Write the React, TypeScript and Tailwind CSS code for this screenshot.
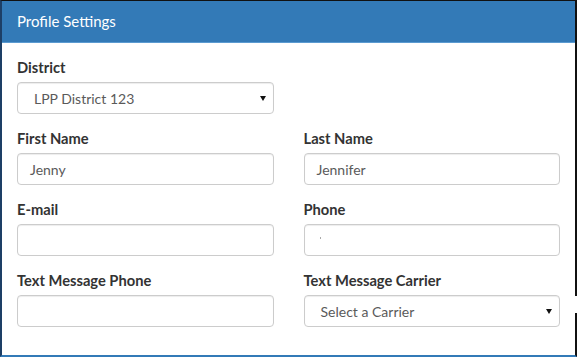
import React from "react";

function Field({ label, children }: { label: string; children: React.ReactNode }) {
  return (
    <div className="flex flex-col">
      <label className="text-[14.7px] leading-[20px] font-bold text-[#333333] mb-[5px]">{label}</label>
      {children}
    </div>
  );
}

function TextInput({ value, dot }: { value?: string; dot?: boolean }) {
  return (
    <div className="h-[32px] border border-[#cccccc] rounded-[4px] bg-white shadow-[inset_0_1px_1px_rgba(0,0,0,0.075)] flex items-center pl-[12px] text-[14px] text-[#5a5a5a]">
      {value}
      {dot && <span className="block w-[1px] h-[2px] bg-[#aaaaaa] ml-[3px] mt-[-4px]" />}
    </div>
  );
}

function SelectBox({ value }: { value: string }) {
  return (
    <div className="h-[32px] border border-[#cccccc] rounded-[4px] bg-white shadow-[inset_0_1px_1px_rgba(0,0,0,0.075)] flex items-center justify-between pl-[16px] pr-[7px] text-[14px] text-[#5a5a5a]">
      <span>{value}</span>
      <svg width="6" height="5" viewBox="0 0 6 5">
        <polygon points="0,0 6,0 3,5" fill="#111111" />
      </svg>
    </div>
  );
}

export default function App() {
  return (
    <div className="w-[578px] h-[359px] bg-white" style={{ fontFamily: "Lato, 'Open Sans', sans-serif" }}>
      <div className="relative w-[577px] h-[357px] border-t border-t-[#111111] border-l-2 border-l-[#1d3f66] border-r-2 border-r-[#111111] border-b-2 border-b-[#337ab7] flex flex-col">
        <div className="h-[42px] bg-[#337ab7] border-b border-b-[#5b9bd1] flex items-center pl-[15px] text-white text-[15px]">
          Profile Settings
        </div>
        <div className="px-[15px] pt-[14px] flex flex-col gap-[14px]">
          <div className="grid grid-cols-2 gap-x-[30px]">
            <Field label="District">
              <SelectBox value="LPP District 123" />
            </Field>
          </div>
          <div className="grid grid-cols-2 gap-x-[30px]">
            <Field label="First Name">
              <TextInput value="Jenny" />
            </Field>
            <Field label="Last Name">
              <TextInput value="Jennifer" />
            </Field>
          </div>
          <div className="grid grid-cols-2 gap-x-[30px]">
            <Field label="E-mail">
              <TextInput />
            </Field>
            <Field label="Phone">
              <TextInput dot />
            </Field>
          </div>
          <div className="grid grid-cols-2 gap-x-[30px]">
            <Field label="Text Message Phone">
              <TextInput />
            </Field>
            <Field label="Text Message Carrier">
              <SelectBox value="Select a Carrier" />
            </Field>
          </div>
        </div>
        <div className="absolute right-[-2px] top-[295px] w-[2px] h-[17px] bg-white" />
      </div>
    </div>
  );
}
